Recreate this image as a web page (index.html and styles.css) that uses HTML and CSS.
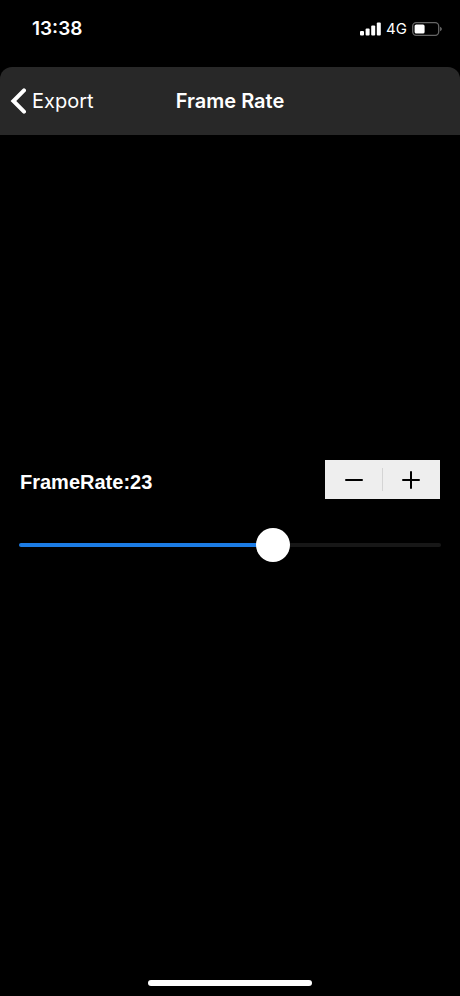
FILE: index.html
```html
<!DOCTYPE html>
<html lang="en">
<head>
<meta charset="utf-8">
<meta name="viewport" content="width=device-width, initial-scale=1">
<title>Frame Rate</title>
<link rel="stylesheet" href="styles.css">
</head>
<body>
<div class="status">
  <time class="clock">13:38</time>
  <div class="indicators">
    <svg class="signal" width="22" height="14" viewBox="0 0 22 14" aria-hidden="true">
      <rect x="1" y="9" width="4" height="4.6" rx="1"/>
      <rect x="6.6" y="6.5" width="4" height="7.1" rx="1"/>
      <rect x="12.2" y="3.5" width="4" height="10.1" rx="1"/>
      <rect x="17.8" y="0.5" width="4" height="13.1" rx="1"/>
    </svg>
    <span class="network">4G</span>
    <svg class="battery" width="30" height="14" viewBox="0 0 30 14" aria-hidden="true">
      <rect class="battery-case" x="0.7" y="0.7" width="26" height="12.6" rx="3.5"/>
      <rect x="2.6" y="2.5" width="10" height="9" rx="1.6"/>
      <path class="battery-tip" d="M28.2 4.8c2 .8 2 3.6 0 4.4z"/>
    </svg>
  </div>
</div>
<header class="navbar">
  <a class="back" href="#export">
    <svg width="16" height="28" viewBox="0 0 16 28" aria-hidden="true"><path d="M14 3.4 3.4 14 14 24.600"/></svg>
    Export
  </a>
  <h1 class="title">Frame Rate</h1>
</header>
<main class="content">
  <div class="row">
    <label class="rate" for="rate">FrameRate:<output id="value" for="rate">23</output></label>
    <div class="stepper">
      <button type="button" id="minus" aria-label="Decrease frame rate"><svg width="18" height="18" viewBox="0 0 18 18" aria-hidden="true"><path d="M1 9h16"/></svg></button>
      <button type="button" id="plus" aria-label="Increase frame rate"><svg width="18" height="18" viewBox="0 0 18 18" aria-hidden="true"><path d="M1 9h16M9 1v16"/></svg></button>
    </div>
  </div>
  <input class="slider" id="rate" type="range" min="1" max="37" value="23">
</main>
<footer class="footer"><div class="home"></div></footer>
<script src="script.js"></script>
</body>
</html>
```
FILE: styles.css
```css
* {
  box-sizing: border-box;
}

body {
  margin: 0;
  min-height: 100vh;
  display: flex;
  flex-direction: column;
  background: #000;
  color: #fff;
  font-family: Inter, "Liberation Sans", sans-serif;
}

.status {
  display: flex;
  justify-content: space-between;
  align-items: center;
  height: 67px;
  padding: 0 18px 10px 32px;
}

.clock {
  font-size: 19px;
  font-weight: 600;
}

.indicators {
  display: flex;
  align-items: center;
  gap: 5px;
  fill: #fff;
}

.network {
  font-size: 15px;
  line-height: 16px;
}

.battery-case {
  fill: none;
  stroke: #666;
  stroke-width: 1.3;
}

.battery-tip {
  fill: #777;
}

.navbar {
  display: grid;
  grid-template-columns: 1fr auto 1fr;
  align-items: center;
  height: 68px;
  padding: 0 10px;
  background: #282828;
  border-radius: 12px 12px 0 0;
}

.back {
  display: flex;
  align-items: center;
  gap: 6px;
  color: #fff;
  font-size: 20px;
  text-decoration: none;
}

.back svg {
  fill: none;
  stroke: #fff;
  stroke-width: 4;
  stroke-linecap: round;
  stroke-linejoin: miter;
}

.title {
  margin: 0;
  font-size: 20px;
  font-weight: 600;
}

.content {
  flex: 1;
  display: flex;
  flex-direction: column;
  gap: 29px;
  padding: 325px 19px 0;
}

.row {
  display: flex;
  justify-content: space-between;
  align-items: center;
  padding: 0 1px;
}

.rate {
  padding-top: 6px;
  font-family: "Liberation Sans", Arial, sans-serif;
  font-size: 20px;
  font-weight: 700;
}

.stepper {
  display: flex;
  background: #eee;
}

.stepper button {
  display: grid;
  place-items: center;
  position: relative;
  width: 58px;
  height: 39px;
  padding: 0;
  border: 0;
  background: none;
}

.stepper button:first-child {
  width: 57px;
}

.stepper button + button::before {
  content: "";
  position: absolute;
  left: 0;
  top: 8px;
  bottom: 8px;
  width: 1px;
  background: #d4d4d4;
}

.stepper svg {
  stroke: #000;
  stroke-width: 2;
  stroke-linecap: round;
}

.slider {
  --fill: 60%;
  appearance: none;
  width: 100%;
  height: 34px;
  margin: 0;
  background: none;
}

.slider::-webkit-slider-runnable-track {
  height: 4px;
  border-radius: 2px;
  background: linear-gradient(to right, #1c7ce5 var(--fill), #171717 var(--fill));
}

.slider::-webkit-slider-thumb {
  appearance: none;
  width: 34px;
  height: 34px;
  margin-top: -15px;
  border-radius: 50%;
  background: #fff;
}

.footer {
  display: flex;
  justify-content: center;
  padding-bottom: 10px;
}

.home {
  width: 164px;
  height: 6px;
  border-radius: 3px;
  background: #fff;
}
```
FILE: script.js
```js
const slider = document.getElementById('rate');
const value = document.getElementById('value');

function update() {
  const share = (slider.value - slider.min) / (slider.max - slider.min);
  value.textContent = slider.value;
  slider.style.setProperty('--fill', `${share * 100}%`);
}

slider.addEventListener('input', update);
document.getElementById('minus').addEventListener('click', () => { slider.stepDown(); update(); });
document.getElementById('plus').addEventListener('click', () => { slider.stepUp(); update(); });
update();
```
